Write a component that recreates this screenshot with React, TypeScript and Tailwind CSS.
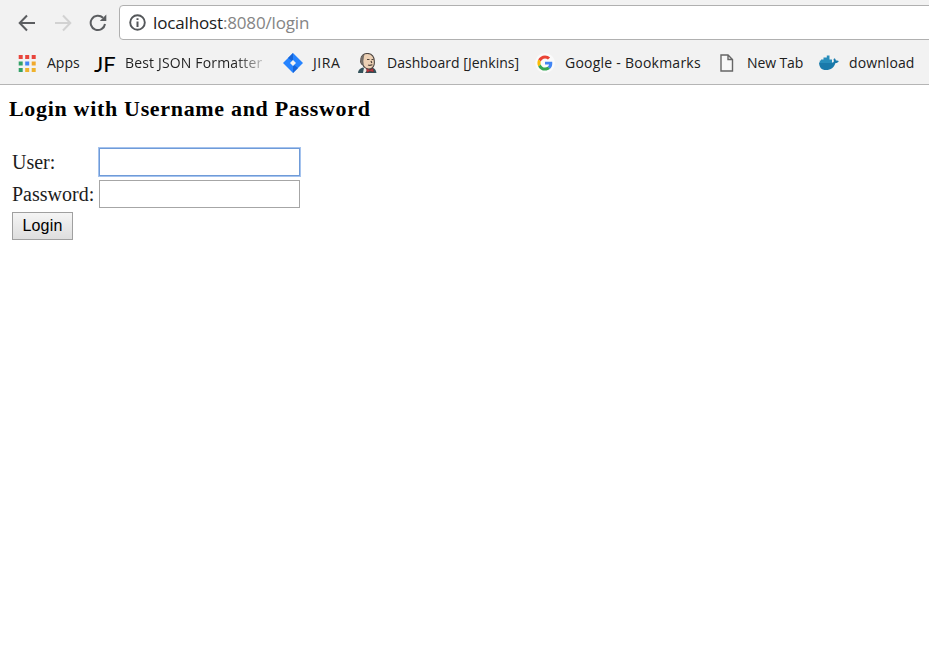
import type { ReactNode } from 'react';

function AppsIcon() {
  const colors = ['#e8453c', '#e8453c', '#e8453c', '#34a268', '#4285f4', '#f0a92c', '#34a268', '#efb22d', '#efb22d'];
  return (
    <svg width="18" height="17" viewBox="0 0 18 17">
      {colors.map((c, i) => (
        <rect key={i} x={(i % 3) * 6.5 + 0.7} y={Math.floor(i / 3) * 6.5} width="4" height="4" fill={c} />
      ))}
    </svg>
  );
}

function JiraIcon() {
  return (
    <svg width="20" height="20" viewBox="0 0 20 20">
      <path d="M10 0L20 10L10 20L0 10Z" fill="#2684ff" />
      <path d="M10 0L5 5L9 8L10 7Z" fill="#1765d8" />
      <path d="M10 20L15 15L11 12L10 13Z" fill="#1765d8" />
      <path d="M10 7L13 10L10 13L7 10Z" fill="#f2f2f2" />
    </svg>
  );
}

function JenkinsIcon() {
  return (
    <svg width="20" height="20" viewBox="0 0 20 20">
      <path d="M0 20C0 17 2 15.5 5 14.5L9 17L14 15C17 15 18 17 18.5 20Z" fill="#34535b" />
      <path d="M3 7C2.5 2.5 6 .5 9.5 .5C14 .5 16.5 4 16.3 8.5C16.8 13 14.5 16 11 16C8 16 6 14.5 5 12C3 11 2.2 8.5 3 7Z" fill="#ecd0b4" stroke="#4c4541" strokeWidth="1.1" />
      <path d="M3 8C2.2 4.5 4 2 6.5 1.5C5.5 4 6 5.5 5.3 8L5.8 12L3.5 11Z" fill="#736d68" />
      <path d="M9 6.5H11.5M13.5 6.5H15.5M10 12C12 12.8 13 12.3 14.5 11.7M13 8L13.8 10" stroke="#51443b" strokeWidth="1.2" fill="none" />
      <path d="M6 14.5L9.5 17L7 20H5Z" fill="#f1eee9" />
      <path d="M8.5 15.5L11.5 17L15 15.5L15.5 19L12 18L9 19.5Z" fill="#bf3940" stroke="#6b272d" strokeWidth=".5" />
    </svg>
  );
}

function GoogleIcon() {
  return (
    <svg width="20" height="20" viewBox="0 0 20 20" className="-ml-[2px]">
      <circle cx="10" cy="10" r="10" fill="#fafafa" />
      <g transform="translate(2.4 2.4) scale(.317)">
        <path fill="#EA4335" d="M24 9.5c3.54 0 6.71 1.22 9.21 3.6l6.85-6.85C35.9 2.38 30.47 0 24 0 14.62 0 6.51 5.38 2.56 13.22l7.98 6.19C12.43 13.72 17.74 9.5 24 9.5z" />
        <path fill="#4285F4" d="M46.98 24.55c0-1.57-.15-3.09-.38-4.55H24v9.02h12.94c-.58 2.96-2.26 5.48-4.78 7.18l7.73 6c4.51-4.18 7.09-10.36 7.09-17.65z" />
        <path fill="#FBBC05" d="M10.53 28.59c-.48-1.45-.76-2.99-.76-4.59s.27-3.14.76-4.59l-7.98-6.19C.92 16.46 0 20.12 0 24c0 3.88.92 7.54 2.56 10.78l7.97-6.19z" />
        <path fill="#34A853" d="M24 48c6.48 0 11.93-2.13 15.89-5.81l-7.73-6c-2.15 1.45-4.92 2.3-8.16 2.3-6.26 0-11.57-4.22-13.47-9.91l-7.98 6.19C6.51 42.62 14.62 48 24 48z" />
      </g>
    </svg>
  );
}

function PageIcon() {
  return (
    <svg width="14" height="18" viewBox="0 0 14 18">
      <path d="M1 1H8L12.5 5.5V17H1Z M8 1V5.5H12.5" fill="#f7f7f7" stroke="#666" strokeWidth="1.4" />
    </svg>
  );
}

function DockerIcon() {
  return (
    <svg width="20" height="16" viewBox="0 0 20 16">
      <path d="M0 7.5H14C15 7.2 15 5.5 14.5 4.3L15.5 3.3C16.5 4.1 16.9 4.8 16.9 5.6C18 5.3 19 5.5 19.8 6C19 7.7 17.8 8.1 16.5 8C15 12.5 12 15 7 15C2.5 15 .3 12.5 0 7.5Z" fill="#1979aa" />
      <path d="M2 4.5H13V8H.8V5.5H2Z M4.5 2.4H10.5V5H4.5Z M7.8 .4H10.5V3H7.8Z" fill="#278dbb" />
    </svg>
  );
}

function Bookmark({ icon, label, className, iconClass, labelClass = '' }: { icon: ReactNode; label: string; className: string; iconClass: string; labelClass?: string }) {
  return (
    <div className={`flex h-full shrink-0 items-center ${className}`}>
      <div className={`flex shrink-0 items-center ${iconClass}`}>{icon}</div>
      <span className={`whitespace-nowrap ${labelClass}`}>{label}</span>
    </div>
  );
}

export default function App() {
  return (
    <div className="h-[669px] w-[929px] overflow-hidden bg-white text-black">
      <header className="h-[85px] border-b border-[#b5b5b5] bg-[#f2f2f2] font-['Open_Sans',sans-serif]">
        <div className="flex h-[45px] items-center pl-[18px]">
          <svg className="mr-[18px] shrink-0" width="18" height="18" viewBox="0 0 18 18" fill="none" stroke="#5b5d60" strokeWidth="2">
            <path d="M17 9H2M9 1.5L1.7 9L9 16.5" />
          </svg>
          <svg className="mr-[17px] shrink-0" width="18" height="18" viewBox="0 0 18 18" fill="none" stroke="#d2d2d2" strokeWidth="2">
            <path d="M1 9H16M9 1.5L16.3 9L9 16.5" />
          </svg>
          <svg className="mr-[11px] shrink-0" width="19" height="19" viewBox="0 0 19 19">
            <path d="M16 11A7.2 7.2 0 1 1 14 4.8" fill="none" stroke="#5b5d60" strokeWidth="2" />
            <path d="M17.3 1.5V8H10.8Z" fill="#5b5d60" />
          </svg>
          <div className="flex h-[35px] w-[820px] shrink-0 items-center rounded-l-sm border border-[#b0b0b0] bg-white pl-[9px]">
            <svg className="mr-[7px]" width="17" height="17" viewBox="0 0 17 17">
              <circle cx="8.5" cy="8.5" r="7.3" fill="none" stroke="#54575a" strokeWidth="1.9" />
              <path d="M7.5 7.5H9.5V13H7.5Z M7.5 4.2H9.5V6.1H7.5Z" fill="#54575a" />
            </svg>
            <span className="text-[17px] leading-6 tracking-[-0.15px] text-[#202020]">localhost<span className="text-[#858585]">:8080/login</span></span>
          </div>
        </div>
        <nav className="flex h-[36px] items-center pl-[18px] text-[14px] leading-5 text-[#202020]">
          <Bookmark className="w-[76px]" iconClass="w-[29px]" icon={<AppsIcon />} label="Apps" />
          <Bookmark className="w-[189px]" iconClass="w-[31px]" icon={<span className="pt-[2px] font-['Lato',sans-serif] text-[22px] leading-5 font-normal text-black">JF</span>} label="Best JSON Formatter" labelClass="tracking-[0.16px] bg-linear-to-r from-[#202020] from-80% to-[#c0c0c0] bg-clip-text text-transparent" />
          <Bookmark className="w-[75px]" iconClass="w-[30px]" icon={<JiraIcon />} label="JIRA" labelClass="tracking-[0.6px]" />
          <Bookmark className="w-[179px]" iconClass="w-[29px]" icon={<JenkinsIcon />} label="Dashboard [Jenkins]" labelClass="tracking-[0.04px]" />
          <Bookmark className="w-[183px]" iconClass="w-[28px]" icon={<GoogleIcon />} label="Google - Bookmarks" labelClass="tracking-[0.24px]" />
          <Bookmark className="w-[99px]" iconClass="w-[27px]" icon={<PageIcon />} label="New Tab" labelClass="tracking-[-0.1px]" />
          <Bookmark className="w-[110px]" iconClass="w-[30px]" icon={<DockerIcon />} label="download" labelClass="tracking-[0.1px]" />
        </nav>
      </header>
      <main className="pl-[9px] font-['Liberation_Serif',serif]">
        <h3 className="pt-[10px] text-[22px] leading-[28px] font-bold tracking-[0.68px]">Login with Username and Password</h3>
        <form className="mt-[24px] pl-[3px] text-[20px] text-[#1c1c1c]" onSubmit={(e) => e.preventDefault()}>
          <div className="flex h-[30px] items-center">
            <label htmlFor="user" className="w-[87px] leading-6">User:</label>
            <input id="user" className="h-[28px] w-[201px] border border-[#6f9bd8] bg-white ring-1 ring-[#a5c3ee] outline-none" />
          </div>
          <div className="mt-[3px] flex h-[28px] items-center">
            <label htmlFor="password" className="w-[87px] leading-6">Password:</label>
            <input id="password" type="password" className="h-[28px] w-[201px] border border-[#a6a6a6] bg-white outline-none" />
          </div>
          <button className="mt-[4px] flex h-[28px] w-[61px] items-center justify-center border border-[#a0a0a0] bg-linear-to-b from-[#f5f5f5] to-[#dedede] font-['Liberation_Sans',sans-serif] text-[16px] tracking-[0.2px] text-black">Login</button>
        </form>
      </main>
    </div>
  );
}
